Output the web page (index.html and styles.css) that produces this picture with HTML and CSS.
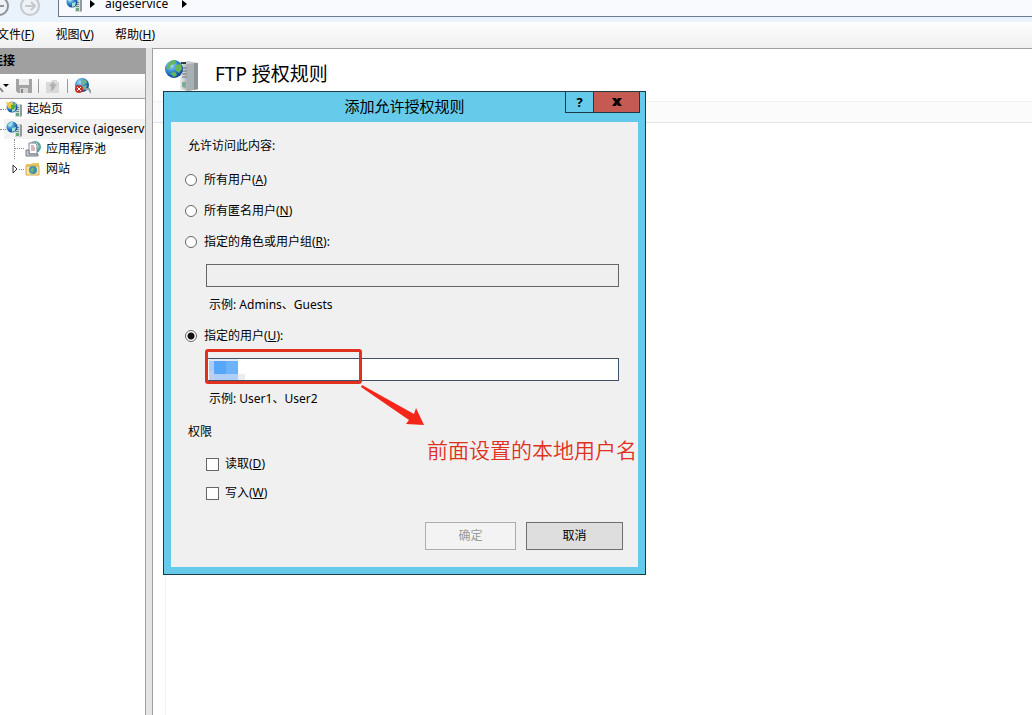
FILE: index.html
```
<!DOCTYPE html>
<html lang="zh-CN">
<head>
  <meta charset="UTF-8">
  <title>FTP 授权规则</title>
  <link rel="stylesheet" href="styles.css">
</head>
<body>
<svg class="symbols" width="0" height="0">
  <defs>
    <radialGradient id="globeFill" cx="35%" cy="30%" r="75%">
      <stop offset="0" stop-color="#a8dcf8"/>
      <stop offset="0.5" stop-color="#2f86d0"/>
      <stop offset="1" stop-color="#0c3f8c"/>
    </radialGradient>
    <linearGradient id="steel" x1="0" x2="1">
      <stop offset="0" stop-color="#eceff0"/>
      <stop offset="1" stop-color="#a3abae"/>
    </linearGradient>
    <symbol id="server" viewBox="0 0 16 16">
      <path d="M9 3h5l2 1v11l-2 1H9z" fill="#8f9c9f"/>
      <rect x="9" y="3" width="5" height="13" fill="#d3dcdd"/>
      <path d="M10 6.500h3M10 8.500h3M10 10.500h3" stroke="#6b8f83"/>
      <rect x="10" y="12" width="3" height="3" fill="#65a877"/>
      <circle cx="6" cy="6" r="5.500" fill="url(#globeFill)"/>
      <path d="M2 4q2-3 5-3l-1 3-3 2zM6 7l4-1-1 4-3 1z" fill="#a4e0d6"/>
    </symbol>
  </defs>
</svg>

<header class="addressbar">
  <button class="nav" type="button" aria-label="后退">
    <svg width="20" height="20" viewBox="0 0 20 20"><circle cx="10" cy="10" r="9"/><path d="M15 10H5M9 6l-4 4 4 4"/></svg>
  </button>
  <button class="nav forward" type="button" aria-label="前进">
    <svg width="20" height="20" viewBox="0 0 20 20"><circle cx="10" cy="10" r="9"/><path d="M5 10h10M11 6l4 4-4 4"/></svg>
  </button>
  <nav class="breadcrumb">
    <svg width="16" height="16"><use href="#server"/></svg>
    <svg width="5" height="8"><path d="M0 0l5 4-5 4z"/></svg>
    <a href="#">aigeservice</a>
    <svg width="5" height="8"><path d="M0 0l5 4-5 4z"/></svg>
  </nav>
</header>

<nav class="menubar">
  <button type="button">文件(<u>F</u>)</button>
  <button type="button">视图(<u>V</u>)</button>
  <button type="button">帮助(<u>H</u>)</button>
</nav>

<div class="workspace">
  <aside class="sidebar">
    <h2>连接</h2>
    <div class="toolbar">
      <button type="button" aria-label="连接"><svg width="10" height="16" viewBox="0 0 10 16"><path d="M0 10l3 4" stroke="#888" stroke-width="2"/><path d="M3 6h6l-3 3z"/></svg></button>
      <button type="button" aria-label="保存"><svg width="16" height="16" viewBox="0 0 16 16"><path d="M0 1h16v14H2l-2-2z" fill="#a3a3a3"/><path d="M3 1h10v6H3z" fill="#ededed"/><path d="M4 10h8v5H4z" fill="#d6d6d6"/><path d="M5 11h2v4H5z" fill="#888"/></svg></button>
      <span class="divider"></span>
      <button type="button" aria-label="向上"><svg width="16" height="16" viewBox="0 0 16 16"><path d="M1 4h5l1-2h5v2h2v11H1z" fill="#d9d9d9"/><path d="M4 8l4-4 4 4h-2q0 4-5 5 2-2 1-5z" fill="#b0b0b0"/></svg></button>
      <span class="divider"></span>
      <button type="button" aria-label="断开连接"><svg width="17" height="16" viewBox="0 0 17 16"><circle cx="8" cy="7" r="7" fill="url(#globeFill)"/><path d="M7 1l5 1 1 3-4 2-2-2zM8 8l5-1-1 4-3 1z" fill="#6fb58b"/><path d="M11 11h4l2 4" fill="none" stroke="#8aa0a5" stroke-width="2"/><circle cx="5" cy="11" r="4" fill="#c92f25"/><path d="M3 9l4 4M7 9l-4 4" stroke="#fff"/></svg></button>
    </div>
    <ul class="tree">
      <li>
        <span class="dots short"></span>
        <svg width="16" height="16" viewBox="0 0 16 16"><use href="#server"/><path d="M0 1l4 1 1-2 2 3 4-1-2 3-3 0-1 3-3-1z" fill="#f0c93d"/><path d="M5 4l4-1 1 3-3 3-2-2z" fill="#55a94d"/></svg>
        <a href="#">起始页</a>
      </li>
      <li class="selected">
        <span class="dots short"></span>
        <svg width="16" height="16"><use href="#server"/></svg>
        <a href="#">aigeservice (aigeservice\Administrator)</a>
      </li>
      <li class="child">
        <span class="dots corner"></span>
        <svg width="16" height="16" viewBox="0 0 16 16"><circle cx="10" cy="6" r="6" fill="#5aa59d"/><path d="M8 1l4 1 2 4-3 3" fill="#cde7e5"/><path d="M4 2h6l2 2v9H4z" fill="#fff" stroke="#7f8494"/><path d="M6 5h3M6 7h4M6 9h4" stroke="#b06f78"/><path d="M1 9v6h12v-2H4V9z" fill="#c5c8d2" stroke="#777d8b"/></svg>
        <a href="#">应用程序池</a>
      </li>
      <li class="child">
        <svg class="expander" width="6" height="10" viewBox="0 0 6 10"><path d="M1 1l4 4-4 4z" fill="#fff" stroke="#333"/></svg>
        <span class="dots tiny"></span>
        <svg width="16" height="16" viewBox="0 0 16 16"><path d="M1 3h5l2-1h6v12H1z" fill="#e7c45e"/><path d="M1 5h13v9H1z" fill="#f6e29c" stroke="#d2a94a"/><circle cx="8" cy="9" r="4" fill="#3f8fb5"/><path d="M5 9l3-3 1 3-2 3z" fill="#78b860"/></svg>
        <a href="#">网站</a>
      </li>
    </ul>
  </aside>

  <main class="content">
    <div class="page_title">
      <svg width="34" height="32" viewBox="0 0 34 32">
        <path d="M15 4l8-2 10 2v26l-9 2-9-2z" fill="#c6cbcd"/>
        <path d="M15 4l8 1v27l-8-2z" fill="url(#steel)"/>
        <path d="M23 5l10-1v26l-10 2z" fill="#a9b0b3"/>
        <path d="M29 4l4 0v26l-4 1z" fill="#8b9396"/>
        <path d="M16 3l5 0v2h-5z" fill="#343a3d"/>
        <path d="M17 9h5M17 12h5M17 15h5M17 18h5" stroke="#6b7478"/>
        <path d="M17 23h4v6l-4-1z" fill="#7fae98"/>
        <circle cx="9" cy="10" r="9" fill="url(#globeFill)"/>
        <path d="M3 5q3-4 8-4l-1 4-4 1-1 3-4 1zM11 6l5-1 1 5-3 4-4-3zM5 14l5-1 2 3-3 2z" fill="#67b65c"/>
      </svg>
      <h1>FTP 授权规则</h1>
    </div>
    <div class="list_header"></div>
    <div class="list"></div>
  </main>
</div>

<form class="dialog" role="dialog" aria-labelledby="dialogTitle">
  <div class="titlebar">
    <h2 id="dialogTitle">添加允许授权规则</h2>
    <div class="caption_buttons">
      <button type="button" class="help" aria-label="帮助">?</button>
      <button type="button" class="close" aria-label="关闭"><svg width="10" height="8" viewBox="0 0 10 8"><path d="M0 0h4l1 2 1-2h4L7 4l3 4H6L5 6 4 8H0l3-4z"/></svg></button>
    </div>
  </div>
  <div class="dialog_body">
    <p>允许访问此内容:</p>
    <label class="option first"><input type="radio" name="access">所有用户(<u>A</u>)</label>
    <label class="option"><input type="radio" name="access">所有匿名用户(<u>N</u>)</label>
    <label class="option"><input type="radio" name="access">指定的角色或用户组(<u>R</u>):</label>
    <input class="textbox" type="text" aria-label="指定的角色或用户组" disabled>
    <p class="hint">示例: Admins、Guests</p>
    <label class="option"><input type="radio" name="access" checked>指定的用户(<u>U</u>):</label>
    <div class="user_field">
      <input class="textbox" type="text" aria-label="指定的用户">
      <svg class="mosaic" width="36" height="22" viewBox="0 0 36 22">
        <path d="M0 2h5v10H0z" fill="#a9cdf6"/>
        <path d="M0 12h5v9H0z" fill="#c4cdf0"/>
        <path d="M5 2h12v13H5z" fill="#56a7f8"/>
        <path d="M17 2h12v13H17z" fill="#6cb3f8"/>
        <path d="M5 15h24v6H5z" fill="#b1cef8"/>
        <path d="M0 0h29v2H0z" fill="#dfe8f4"/>
        <path d="M29 15h7v6h-7z" fill="#e9edf2"/>
      </svg>
      <div class="highlight"></div>
      <svg class="arrow" width="64" height="42" viewBox="0 0 64 42"><path d="M0 2l1-2 52 29 2-6 8 17-18-1 3-4z"/></svg>
      <div class="note">前面设置的本地用户名</div>
    </div>
    <p class="hint">示例: User1、User2</p>
    <p class="permissions">权限</p>
    <label class="check"><input type="checkbox">读取(<u>D</u>)</label>
    <label class="check"><input type="checkbox">写入(<u>W</u>)</label>
    <div class="actions">
      <button type="submit" class="ok" disabled>确定</button>
      <button type="button" class="cancel">取消</button>
    </div>
  </div>
</form>
</body>
</html>
```

FILE: styles.css
```
* {
  box-sizing: border-box;
}

body {
  margin: 0;
  min-height: 100vh;
  display: flex;
  flex-direction: column;
  background: #f0f0f0;
  color: #000;
  font: 12px/20px "Noto Sans", "Noto Sans CJK SC", sans-serif;
  overflow: hidden;
}

button,
input {
  font: inherit;
  color: inherit;
}

button {
  padding: 0;
  border: none;
  background: none;
}

a {
  color: inherit;
  text-decoration: none;
}

u {
  text-underline-offset: 1px;
}

h1,
h2,
p,
ul {
  margin: 0;
  padding: 0;
  font-weight: normal;
}

svg {
  flex: none;
  display: block;
}

.symbols {
  position: absolute;
}

/* address bar */
.addressbar {
  display: flex;
  height: 22px;
  background: #eaf2fb;
}

.nav {
  width: 20px;
  height: 20px;
  margin: -4px 10px 0 -11px;
}

.nav.forward {
  margin: -4px 18px 0 1px;
}

.nav svg {
  fill: #eef1f6;
  stroke: #8e939b;
  stroke-width: 2;
}

.nav.forward svg {
  stroke: #c4c8cf;
}

.breadcrumb {
  flex: 1;
  display: flex;
  align-items: center;
  gap: 8px;
  height: 24px;
  margin-top: -7px;
  padding-left: 7px;
  padding-bottom: 2px;
  border: 1px solid #6d7b8d;
  border-right: none;
  background: #f8fafd;
}

.breadcrumb a {
  margin: 0 6px 0 2px;
}

/* menu */
.menubar {
  display: flex;
  gap: 21px;
  height: 26px;
  margin-left: -3px;
  background: linear-gradient(#fdfdfd, #f0f0f0);
}

/* panes */
.workspace {
  flex: 1;
  display: flex;
  background: #e4e4e4;
}

.sidebar {
  width: 146px;
  flex: none;
  margin-right: 6px;
  border-right: 1px solid #a0a0a0;
  background: #fff;
  overflow: hidden;
}

.sidebar h2 {
  height: 26px;
  margin-left: -9px;
  background: #a0a0a0;
  font-size: 12px;
  font-weight: bold;
  line-height: 26px;
}

.toolbar {
  display: flex;
  align-items: center;
  gap: 6px;
  height: 25px;
  border-bottom: 1px solid #a0a0a0;
  background: linear-gradient(#fff, #ededed);
}

.divider {
  width: 1px;
  height: 14px;
  background: #999;
}

.tree {
  list-style: none;
}

.tree li {
  display: flex;
  align-items: center;
  height: 20px;
  white-space: nowrap;
}

.tree a {
  margin-left: 5px;
}

.tree .selected {
  background: linear-gradient(90deg, transparent 4px, #f2f2f2 4px);
}

.tree .child {
  padding-left: 12px;
}

.dots {
  flex: none;
  border-top: 1px dotted #888;
}

.dots.short {
  width: 6px;
}

.dots.corner {
  width: 11px;
  height: 20px;
  margin-left: 2px;
  border-top: none;
  border-left: 1px dotted #888;
  background: repeating-linear-gradient(90deg, #888 0 1px, transparent 1px 2px) 0 9px / 100% 1px no-repeat;
}

.dots.tiny {
  width: 5px;
  margin: 0 1px;
}

.content {
  flex: 1;
  display: flex;
  flex-direction: column;
  border-top: 1px solid #a0a0a0;
  border-left: 1px solid #a0a0a0;
  background: #fff;
}

.page_title {
  display: flex;
  align-items: center;
  gap: 16px;
  height: 52px;
  padding-left: 12px;
}

.page_title h1 {
  font-size: 19px;
  line-height: 24px;
  padding-bottom: 2px;
}

.list_header {
  height: 22px;
  border-top: 1px solid #f0f0f0;
  border-bottom: 1px solid #e4e4e4;
  background: #fbfbfb;
}

.list {
  flex: 1;
  margin-left: 12px;
  border-left: 1px solid #f2f2f2;
}

/* dialog */
.dialog {
  position: absolute;
  top: 91px;
  left: 163px;
  width: 483px;
  padding: 0 7px 7px;
  border: 1px solid #1c3a44;
  background: #66caea;
}

.titlebar {
  position: relative;
  height: 30px;
}

.titlebar h2 {
  font-size: 15px;
  line-height: 28px;
  text-align: center;
}

.caption_buttons {
  position: absolute;
  top: -1px;
  right: -2px;
  display: flex;
  border: 1px solid #1c3a44;
}

.caption_buttons button {
  display: grid;
  place-items: center;
  width: 27px;
  height: 20px;
  font-size: 13px;
  font-weight: bold;
}

.caption_buttons .close {
  width: 46px;
  border-left: 1px solid #1c3a44;
  background: #c45a52;
}

.dialog_body {
  display: flex;
  flex-direction: column;
  padding: 14px 15px 17px 17px;
  background: #f0f0f0;
}

.option,
.check {
  display: flex;
  align-items: center;
  margin-top: 11px;
}

.option.first {
  margin-top: 14px;
}

.option input,
.check input {
  appearance: none;
  width: 13px;
  height: 13px;
  margin: 0 6px 0 0;
  border: 1px solid #666;
  background: #fff;
}

.option input {
  width: 12px;
  height: 12px;
  margin: 0 7px 0 -3px;
  border-radius: 50%;
}

.option input:checked {
  background: radial-gradient(circle, #111 3px, #fff 4px);
}

.textbox {
  display: block;
  width: 100%;
  height: 23px;
  padding: 0 4px;
  border: 1px solid #3f5068;
  background: #fff;
}

.textbox:disabled {
  border-color: #666;
  background: #efefef;
}

.dialog_body > .textbox,
.user_field {
  width: auto;
  margin: 12px 4px 8px 18px;
}

.user_field {
  position: relative;
}

.hint {
  margin-left: 21px;
}

.permissions {
  margin-top: 13px;
}

.check {
  margin: 12px 0 0 18px;
}

.check + .check {
  margin-top: 9px;
}

.actions {
  display: flex;
  justify-content: flex-end;
  gap: 10px;
  margin-top: 19px;
}

.actions button {
  width: 97px;
  height: 28px;
  border: 1px solid #6e6e6e;
  background: #dedede;
}

.actions .ok {
  width: 91px;
  border-color: #adadad;
  background: #f3f3f3;
  color: #999;
}

/* marks drawn over the user field */
.mosaic {
  position: absolute;
  top: 1px;
  left: 3px;
}

.highlight {
  position: absolute;
  top: -9px;
  left: -1px;
  width: 157px;
  height: 35px;
  border: 3px solid #e0301e;
  border-radius: 3px;
}

.arrow {
  position: absolute;
  top: 27px;
  left: 155px;
  fill: #f4261a;
}

.note {
  position: absolute;
  top: 77px;
  left: 221px;
  color: #e0301e;
  font-size: 21px;
  font-weight: 350;
  line-height: 30px;
  white-space: nowrap;
}
```
